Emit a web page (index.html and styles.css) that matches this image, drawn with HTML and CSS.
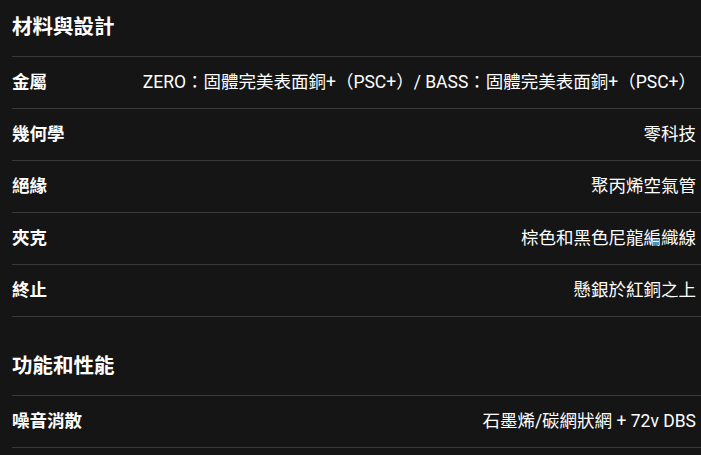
FILE: index.html
```html
<!DOCTYPE html>
<html lang="zh-Hant">
<head>
    <meta charset="UTF-8">
    <title>規格</title>
    <link rel="stylesheet" href="styles.css">
</head>
<body>

<div class="specs">
    <div class="section">
        <h2 class="section-title">材料與設計</h2>
        <div class="row"><span class="label">金屬</span><span class="value">ZERO：固體完美表面銅+（PSC+）/ BASS：固體完美表面銅+（PSC+）</span></div>
        <div class="row"><span class="label">幾何學</span><span class="value">零科技</span></div>
        <div class="row"><span class="label">絕緣</span><span class="value">聚丙烯空氣管</span></div>
        <div class="row"><span class="label">夾克</span><span class="value">棕色和黑色尼龍編織線</span></div>
        <div class="row"><span class="label">終止</span><span class="value">懸銀於紅銅之上</span></div>
    </div>
    <div class="section">
        <h2 class="section-title">功能和性能</h2>
        <div class="row"><span class="label">噪音消散</span><span class="value">石墨烯/碳網狀網 + 72v DBS</span></div>
    </div>
</div>

</body>
</html>
```

FILE: styles.css
```css
html,body{
    height: 100%;
}
body{
    margin: 0;
    background: #151515;
    color: #fff;
    font-family: Roboto, "Noto Sans CJK TC", sans-serif;
    overflow: hidden;
}

.specs{
    padding-left: 12px;
}

.section + .section{
    margin-top: 22px;
}

.section-title{
    margin: 0;
    padding: 14px 0 16px;
    font-size: 20.5px;
    line-height: 26px;
    font-weight: 700;
    border-bottom: 1px solid #3a3a3a;
}

.row{
    display: flex;
    justify-content: space-between;
    align-items: center;
    padding: 15px 5px 15px 0;
    line-height: 21px;
    border-bottom: 1px solid #3a3a3a;
}

.label{
    font-size: 17.5px;
    font-weight: 700;
}

.value{
    font-size: 17.5px;
    text-align: right;
}
```
